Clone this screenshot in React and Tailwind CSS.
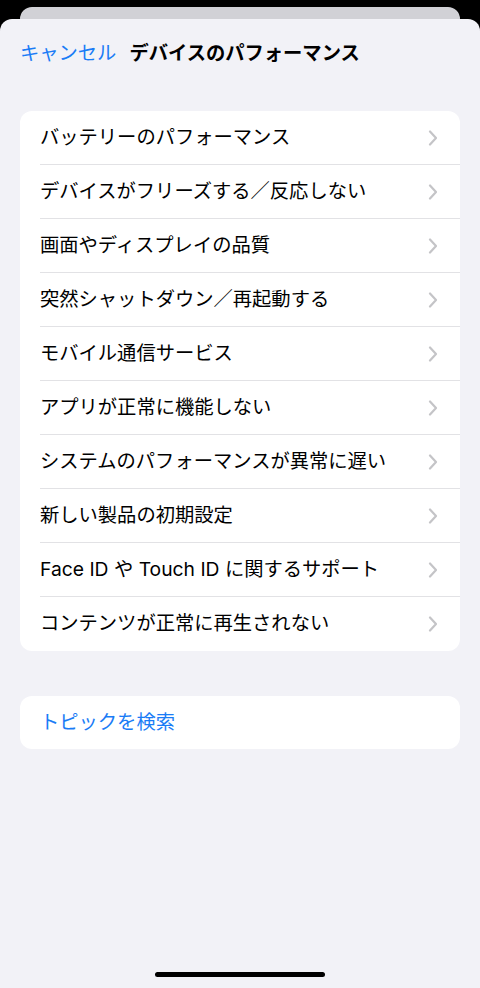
import React from "react";

const items = [
  "バッテリーのパフォーマンス",
  "デバイスがフリーズする／反応しない",
  "画面やディスプレイの品質",
  "突然シャットダウン／再起動する",
  "モバイル通信サービス",
  "アプリが正常に機能しない",
  "システムのパフォーマンスが異常に遅い",
  "新しい製品の初期設定",
  "Face ID や Touch ID に関するサポート",
  "コンテンツが正常に再生されない",
];

function Chevron() {
  return (
    <svg width="10" height="16" viewBox="0 0 10 16" fill="none">
      <path d="M2 1.5 L8 8 L2 14.5" stroke="#c4c4c7" strokeWidth="2.2" strokeLinecap="round" strokeLinejoin="round" />
    </svg>
  );
}

export default function App() {
  return (
    <div
      className="h-[988px] w-[480px] bg-black flex flex-col overflow-hidden"
      style={{ fontFamily: 'Inter, "Noto Sans CJK JP", "Noto Sans", sans-serif' }}
    >
      <div className="mx-[20px] mt-[7px] h-[12px] shrink-0 rounded-t-[12px] bg-[#d1d1d6]" />
      <div className="flex-1 rounded-t-[12px] bg-[#f2f2f7] flex flex-col">
        <div className="h-[70px] flex items-center px-[20px] gap-[13px] text-[19.3px] leading-none">
          <span className="text-[#1a7cf6]">キャンセル</span>
          <span className="font-semibold text-black">デバイスのパフォーマンス</span>
        </div>
        <div className="mt-[22px] mx-[20px] rounded-[12px] bg-white overflow-hidden">
          {items.map((t, i) => (
            <div key={i} className="flex pl-[20px] h-[54px]">
              <div
                className={
                  "flex-1 flex items-center justify-between pr-[22px] " +
                  (i < items.length - 1 ? "border-b border-[#e2e2e5]" : "")
                }
              >
                <span className="text-[19.3px] leading-none text-black">{t}</span>
                <Chevron />
              </div>
            </div>
          ))}
        </div>
        <div className="mt-[45px] mx-[20px] rounded-[12px] bg-white h-[53px] flex items-center pl-[20px]">
          <span className="text-[19.3px] leading-none text-[#1a7cf6]">トピックを検索</span>
        </div>
        <div className="mt-auto mb-[11px] mx-auto w-[170px] h-[5px] rounded-full bg-black" />
      </div>
    </div>
  );
}
